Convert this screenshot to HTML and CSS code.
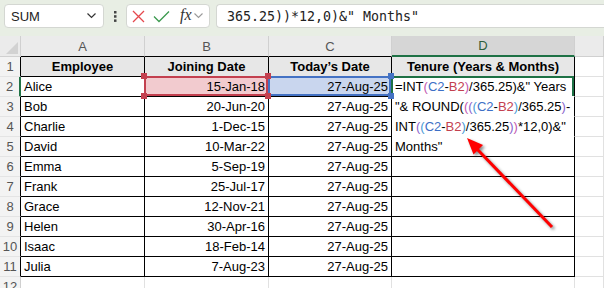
FILE: index.html
```html
<!DOCTYPE html>
<html lang="en">
<head>
    <meta charset="UTF-8">
    <meta name="viewport" content="width=device-width, initial-scale=1.0">
    <title>Tenure formula</title>
    <link rel="stylesheet" href="styles.css">
</head>
<body>
    <div class="formula-bar">
        <div class="name-box">
            <span>SUM</span>
            <svg width="9" height="6" viewBox="0 0 9 6"><polyline points="0.5,0.5 4.5,4.5 8.5,0.5" fill="none" stroke="#333" stroke-width="1.2"/></svg>
        </div>
        <div class="dots">
            <svg width="3" height="11" viewBox="0 0 3 11"><rect x="0" y="0" width="2.5" height="2.5" fill="#444"/><rect x="0" y="4.2" width="2.5" height="2.5" fill="#444"/><rect x="0" y="8.4" width="2.5" height="2.5" fill="#444"/></svg>
        </div>
        <div class="fx-box">
            <svg class="cancel" width="13" height="13" viewBox="0 0 13 13"><path d="M1 1 L12 12 M12 1 L1 12" stroke="#e5484d" stroke-width="1.3" fill="none"/></svg>
            <svg class="enter" width="17" height="13" viewBox="0 0 17 13"><polyline points="1,6.5 6,11.5 16,1.5" stroke="#3c9a4f" stroke-width="1.3" fill="none"/></svg>
            <span class="fx">fx</span>
            <svg width="9" height="6" viewBox="0 0 9 6"><polyline points="0.5,0.5 4.5,4.5 8.5,0.5" fill="none" stroke="#9a9a9a" stroke-width="1.1"/></svg>
        </div>
        <div class="formula-input">365.25))*12,0)&amp;" Months"</div>
    </div>

    <div class="sheet">
        <!-- column headers -->
        <div class="cell corner"><svg width="12" height="12" viewBox="0 0 12 12"><polygon points="12,0 12,12 0,12" fill="#d2d2d2"/></svg></div>
        <div class="cell ch">A</div>
        <div class="cell ch">B</div>
        <div class="cell ch">C</div>
        <div class="cell ch sel">D</div>
        <div class="cell ch out"></div>

        <!-- row 1 -->
        <div class="cell rh in">1</div>
        <div class="cell t hd">Employee</div>
        <div class="cell t hd">Joining Date</div>
        <div class="cell t hd">Today’s Date</div>
        <div class="cell t hd">Tenure (Years &amp; Months)</div>
        <div class="cell"></div>

        <!-- row 2 -->
        <div class="cell rh in active">2</div>
        <div class="cell t">Alice</div>
        <div class="cell t num ref-b">15-Jan-18</div>
        <div class="cell t num ref-c">27-Aug-25</div>
        <div class="cell t edit current">=INT<span class="p2">(</span><span class="rc">C2</span>-<span class="rb">B2</span><span class="p2">)</span>/365.25)&amp;" Years</div>
        <div class="cell"></div>

        <!-- row 3 -->
        <div class="cell rh in">3</div>
        <div class="cell t">Bob</div>
        <div class="cell t num">20-Jun-20</div>
        <div class="cell t num">27-Aug-25</div>
        <div class="cell t edit">"&amp; ROUND(<span class="p2">(</span><span class="p3">(</span><span class="p4">(</span><span class="rc">C2</span>-<span class="rb">B2</span><span class="p4">)</span>/365.25<span class="p3">)</span>-</div>
        <div class="cell"></div>

        <!-- row 4 -->
        <div class="cell rh in">4</div>
        <div class="cell t">Charlie</div>
        <div class="cell t num">1-Dec-15</div>
        <div class="cell t num">27-Aug-25</div>
        <div class="cell t edit">INT<span class="p3">(</span><span class="p4">(</span><span class="rc">C2</span>-<span class="rb">B2</span><span class="p4">)</span>/365.25<span class="p3">)</span><span class="p2">)</span>*12,0)&amp;"</div>
        <div class="cell"></div>

        <!-- row 5 -->
        <div class="cell rh in">5</div>
        <div class="cell t">David</div>
        <div class="cell t num">10-Mar-22</div>
        <div class="cell t num">27-Aug-25</div>
        <div class="cell t">Months"</div>
        <div class="cell"></div>

        <div class="cell rh in">6</div>
        <div class="cell t">Emma</div>
        <div class="cell t num">5-Sep-19</div>
        <div class="cell t num">27-Aug-25</div>
        <div class="cell t"></div>
        <div class="cell"></div>

        <div class="cell rh in">7</div>
        <div class="cell t">Frank</div>
        <div class="cell t num">25-Jul-17</div>
        <div class="cell t num">27-Aug-25</div>
        <div class="cell t"></div>
        <div class="cell"></div>

        <div class="cell rh in">8</div>
        <div class="cell t">Grace</div>
        <div class="cell t num">12-Nov-21</div>
        <div class="cell t num">27-Aug-25</div>
        <div class="cell t"></div>
        <div class="cell"></div>

        <div class="cell rh in">9</div>
        <div class="cell t">Helen</div>
        <div class="cell t num">30-Apr-16</div>
        <div class="cell t num">27-Aug-25</div>
        <div class="cell t"></div>
        <div class="cell"></div>

        <div class="cell rh in">10</div>
        <div class="cell t">Isaac</div>
        <div class="cell t num">18-Feb-14</div>
        <div class="cell t num">27-Aug-25</div>
        <div class="cell t"></div>
        <div class="cell"></div>

        <div class="cell rh in">11</div>
        <div class="cell t">Julia</div>
        <div class="cell t num">7-Aug-23</div>
        <div class="cell t num">27-Aug-25</div>
        <div class="cell t"></div>
        <div class="cell"></div>

        <div class="cell rh">12</div>
        <div class="cell"></div>
        <div class="cell"></div>
        <div class="cell"></div>
        <div class="cell"></div>
        <div class="cell"></div>
    </div>

    <!-- callout arrow pointing at the formula -->
    <svg class="arrow" width="604" height="288" viewBox="0 0 604 288">
        <line x1="552" y1="227" x2="477" y2="149" stroke="#ff0000" stroke-width="3"/>
        <polygon points="467,138 483,145 473.5,154.5" fill="#ff0000"/>
    </svg>
</body>
</html>
```

FILE: styles.css
```css
html, body {
    margin: 0;
    padding: 0;
    background-color: #fff;
    font-family: "Liberation Sans", Arial, sans-serif;
    overflow: hidden;
}
.formula-bar {
    height: 36px;
    background-color: #e8eee4;
    display: flex;
    align-items: flex-start;
    padding: 4px 0 0 4px;
    box-sizing: border-box;
}
.name-box {
    width: 100px;
    height: 24px;
    box-sizing: border-box;
    background-color: #fff;
    border: 1px solid #d4d7d2;
    border-radius: 4px;
    display: flex;
    align-items: center;
    justify-content: space-between;
    padding: 0 7px 0 6px;
    font-size: 13px;
    color: #222;
}
.dots {
    width: 22px;
    height: 24px;
    display: flex;
    align-items: center;
    justify-content: center;
}
.fx-box {
    width: 84px;
    height: 24px;
    box-sizing: border-box;
    background-color: #fff;
    border: 1px solid #d4d7d2;
    border-radius: 4px;
    display: flex;
    align-items: center;
    padding-left: 5px;
}
.fx-box .enter {
    margin-left: 8px;
}
.fx {
    font-family: "Liberation Serif", serif;
    font-style: italic;
    font-size: 16px;
    color: #333;
    margin: 0 2px 2px 10px;
}
.formula-input {
    flex: 1;
    height: 24px;
    margin-left: 6px;
    box-sizing: border-box;
    background-color: #fff;
    border: 1px solid #d4d7d2;
    border-right: none;
    border-radius: 4px 0 0 4px;
    padding-left: 10px;
    display: flex;
    align-items: center;
    font-family: "DejaVu Sans Mono", monospace;
    font-size: 13.3px;
    color: #222;
}

.sheet {
    display: grid;
    grid-template-columns: 21px 124px 124px 123px 183px 1fr;
    grid-template-rows: 21px;
    grid-auto-rows: 20px;
}
.cell {
    box-sizing: border-box;
    border-right: 1px solid #e1e1e1;
    border-bottom: 1px solid #e1e1e1;
    padding: 0 3px;
    display: flex;
    align-items: center;
    font-size: 13px;
    color: #000;
    white-space: nowrap;
}
.corner {
    background-color: #ebebeb;
    border-color: #d0d0d0;
    align-items: flex-end;
    justify-content: flex-end;
    padding: 0 2px 2px 0;
}
.ch {
    background-color: #ebebeb;
    border-right-color: #d0d0d0;
    border-bottom-color: #000;
    justify-content: center;
    color: #555;
}
.ch.sel {
    background-color: #d6d6d6;
    border-bottom: 2px solid #1e7145;
    color: #2e5e3c;
}
.ch.out {
    border-bottom-color: #d0d0d0;
}
.rh {
    background-color: #f3f3f3;
    border-bottom-color: #e4e4e4;
    border-right-color: #d0d0d0;
    justify-content: center;
    padding: 0;
    color: #555;
}
.rh.in {
    border-right-color: #000;
}
.rh.active {
    border-right: 2px solid #217346;
}
.t {
    border-right-color: #000;
    border-bottom-color: #000;
}
.hd {
    background-color: #e7e7e7;
    font-weight: bold;
    justify-content: center;
}
.num {
    justify-content: flex-end;
}

/* formula reference highlights */
.ref-b, .ref-c, .current {
    position: relative;
}
.ref-b {
    background-color: #f2cbcf;
}
.ref-c {
    background-color: #c9d6ee;
}
.ref-b::before, .ref-c::before, .current::before {
    content: "";
    position: absolute;
    left: -1px;
    top: -1px;
    right: 0;
    bottom: 0;
    border: 2px solid #c3404f;
}
.ref-b::before { z-index: 3; }
.ref-c::before {
    border-color: #4472c4;
    z-index: 2;
}
.current::before {
    border-color: #1e7145;
    border-bottom: none;
    z-index: 1;
}
.ref-b::after, .ref-c::after {
    content: "";
    position: absolute;
    left: -4px;
    top: -4px;
    right: -3px;
    bottom: -3px;
    --h: #c3404f;
    background:
        linear-gradient(var(--h), var(--h)) left top / 6px 6px no-repeat,
        linear-gradient(var(--h), var(--h)) right top / 6px 6px no-repeat,
        linear-gradient(var(--h), var(--h)) left bottom / 6px 6px no-repeat,
        linear-gradient(var(--h), var(--h)) right bottom / 6px 6px no-repeat;
    z-index: 3;
}
.ref-c::after {
    --h: #4472c4;
    z-index: 2;
}

/* in-cell editor text spilling down D2:D5 */
.edit {
    border-bottom-color: transparent;
    overflow: visible;
}
.rc { color: #3d6fc6; }
.rb { color: #c3404f; }
.p2 { color: #c256b0; }
.p3 { color: #8a62cc; }
.p4 { color: #4a9ad6; }

.arrow {
    position: absolute;
    left: 0;
    top: 0;
    pointer-events: none;
    filter: drop-shadow(2px 2px 1.5px rgba(0, 0, 0, 0.45));
}
```
